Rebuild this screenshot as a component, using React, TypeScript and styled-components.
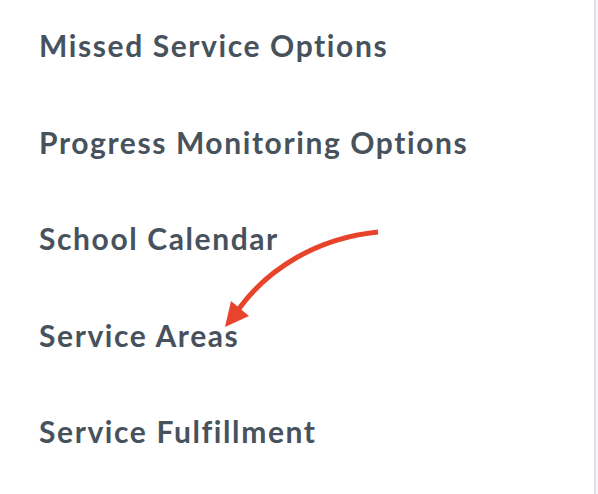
import React from 'react';
import styled, { createGlobalStyle } from 'styled-components';

const GlobalStyle = createGlobalStyle`
  html, body {
    margin: 0;
    padding: 0;
    background: #f7f7fa;
  }
`;

const items = [
  'Missed Service Options',
  'Progress Monitoring Options',
  'School Calendar',
  'Service Areas',
  'Service Fulfillment',
];

const Page = styled.div`
  display: flex;
  width: 598px;
  height: 494px;
  overflow: hidden;
`;

const Sidebar = styled.nav`
  position: relative;
  width: 594px;
  height: 100%;
  background: #ffffff;
  border-right: 2px solid #dedee3;
  box-sizing: content-box;
`;

const Menu = styled.ul`
  list-style: none;
  margin: 0;
  padding: 12px 0 0 39px;
  display: flex;
  flex-direction: column;
`;

const MenuItem = styled.li`
  height: 96.5px;
  font-family: 'Lato', 'Open Sans', sans-serif;
  font-weight: 700;
  font-size: 30px;
  line-height: 66px;
  color: #47525d;
  letter-spacing: 1.6px;
`;

const ArrowOverlay = styled.svg`
  position: absolute;
  left: 0;
  top: 0;
  pointer-events: none;
`;

export default function App() {
  return (
    <>
      <GlobalStyle />
      <Page>
        <Sidebar>
          <Menu>
            {items.map((label) => (
              <MenuItem key={label}>{label}</MenuItem>
            ))}
          </Menu>
          <ArrowOverlay width="594" height="494" viewBox="0 0 594 494">
            <path
              d="M378 232 C 318 238, 268 268, 238 310"
              fill="none"
              stroke="#e8432b"
              strokeWidth="5"
              strokeLinecap="butt"
            />
            <polygon points="225,327 249,316 231,301" fill="#e8432b" />
          </ArrowOverlay>
        </Sidebar>
      </Page>
    </>
  );
}
